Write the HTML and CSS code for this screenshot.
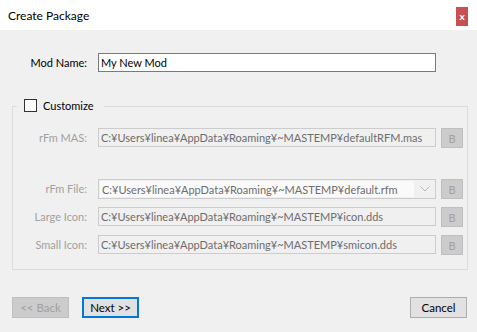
FILE: index.html
```html
<!DOCTYPE html>
<html lang="en">
<head>
    <meta charset="UTF-8">
    <title>Create Package</title>
    <link rel="stylesheet" href="styles.css">
</head>
<body>
    <div class="window">
        <div class="titlebar">
            <span class="title">Create Package</span>
            <button class="close-btn">x</button>
        </div>

        <div class="content">
            <div class="name-row">
                <label class="field-label">Mod Name:</label>
                <input class="text-input" type="text" value="My New Mod">
            </div>

            <div class="group">
                <div class="group-head">
                    <span class="checkbox"></span>
                    <span>Customize</span>
                </div>

                <div class="field-row row-mas">
                    <label class="field-label disabled">rFm MAS:</label>
                    <div class="text-input disabled">C:¥Users¥linea¥AppData¥Roaming¥~MASTEMP¥defaultRFM.mas</div>
                    <button class="browse-btn">B</button>
                </div>

                <div class="field-row row-file">
                    <label class="field-label disabled">rFm File:</label>
                    <div class="combo disabled">
                        <span class="combo-text">C:¥Users¥linea¥AppData¥Roaming¥~MASTEMP¥default.rfm</span>
                        <svg class="chevron" width="10" height="6" viewBox="0 0 10 6">
                            <path d="M0.5 0.5 L5 5 L9.5 0.5" fill="none" stroke="#b8b8b8" stroke-width="1"/>
                        </svg>
                    </div>
                    <button class="browse-btn">B</button>
                </div>

                <div class="field-row">
                    <label class="field-label disabled">Large Icon:</label>
                    <div class="text-input disabled">C:¥Users¥linea¥AppData¥Roaming¥~MASTEMP¥icon.dds</div>
                    <button class="browse-btn">B</button>
                </div>

                <div class="field-row">
                    <label class="field-label disabled">Small Icon:</label>
                    <div class="text-input disabled">C:¥Users¥linea¥AppData¥Roaming¥~MASTEMP¥smicon.dds</div>
                    <button class="browse-btn">B</button>
                </div>
            </div>

            <div class="button-bar">
                <button class="btn btn-disabled">&lt;&lt; Back</button>
                <button class="btn btn-default">Next &gt;&gt;</button>
                <button class="btn btn-cancel">Cancel</button>
            </div>
        </div>
    </div>
</body>
</html>
```

FILE: styles.css
```css
html, body {
    margin: 0;
    padding: 0;
}

body {
    font-family: 'Lato', 'Noto Sans', sans-serif;
    font-size: 11px;
    color: #000;
    background: #f0f0f0;
}

.window {
    width: 477px;
    height: 332px;
    display: flex;
    flex-direction: column;
}

.titlebar {
    height: 30px;
    background: #fff;
    display: flex;
    align-items: center;
    padding-left: 8px;
    padding-right: 9px;
}

.title {
    font-size: 12px;
    flex: 1;
}

.close-btn {
    width: 12px;
    height: 19px;
    margin-top: 3px;
    padding: 0;
    border: none;
    background: #c75050;
    color: #fff;
    font-family: inherit;
    font-size: 10px;
    font-weight: 700;
    line-height: 19px;
}

.content {
    flex: 1;
    background: #f0f0f0;
    padding: 0 12px 0 12px;
}

.name-row {
    display: flex;
    align-items: center;
    margin-top: 23px;
}

.field-label {
    width: 75px;
    padding-right: 11px;
    text-align: right;
    flex-shrink: 0;
}

.field-label.disabled {
    color: #a0a0a0;
}

.text-input {
    box-sizing: border-box;
    width: 338px;
    height: 19px;
    flex-shrink: 0;
    border: 1px solid #7a7a7a;
    background: #fff;
    font-family: inherit;
    font-size: 11px;
    line-height: 17px;
    padding: 0 2px;
    margin: 0;
    outline: none;
    white-space: nowrap;
    overflow: hidden;
}

.text-input.disabled {
    border-color: #cccccc;
    background: #f0f0f0;
    color: #6d6d6d;
}

.group {
    margin-top: 34px;
    height: 164px;
    box-sizing: border-box;
    border: 1px solid #dcdcdc;
    margin-right: -3px;
}

.group-head {
    display: flex;
    align-items: center;
    gap: 6px;
    width: fit-content;
    height: 14px;
    margin-top: -9px;
    margin-left: 4px;
    padding: 0 10px 0 7px;
    background: #f0f0f0;
}

.checkbox {
    box-sizing: border-box;
    width: 13px;
    height: 13px;
    border: 1px solid #333;
    background: #fff;
}

.field-row {
    display: flex;
    align-items: flex-start;
    margin-top: 8px;
}

.field-row .field-label {
    width: 74px;
    line-height: 19px;
}

.row-mas {
    margin-top: 16px;
}

.row-file {
    margin-top: 31px;
}

.combo {
    box-sizing: border-box;
    width: 338px;
    height: 20px;
    flex-shrink: 0;
    border: 1px solid #cccccc;
    background: #f0f0f0;
    color: #6d6d6d;
    display: flex;
    align-items: center;
    padding: 1px;
}

.combo-text {
    flex: 1;
    height: 100%;
    background: #fafafa;
    padding-left: 2px;
    line-height: 17px;
    margin-right: 6px;
    white-space: nowrap;
    overflow: hidden;
}

.chevron {
    margin-right: 4px;
}

.browse-btn {
    box-sizing: border-box;
    width: 22px;
    height: 20px;
    flex-shrink: 0;
    margin-left: 5px;
    padding: 0;
    border: 1px solid #bfbfbf;
    background: #cccccc;
    color: #a0a0a0;
    font-family: inherit;
    font-size: 11px;
}

.button-bar {
    display: flex;
    gap: 13px;
    margin-top: 27px;
}

.btn {
    box-sizing: border-box;
    width: 57px;
    height: 21px;
    padding: 0;
    font-family: inherit;
    font-size: 11.5px;
    border: 1px solid #adadad;
    background: #e1e1e1;
    color: #000;
}

.btn-disabled {
    border-color: #bfbfbf;
    background: #cccccc;
    color: #a0a0a0;
}

.btn-default {
    border: 2px solid #0078d7;
}

.btn-cancel {
    margin-left: auto;
    margin-right: -2px;
}
```
